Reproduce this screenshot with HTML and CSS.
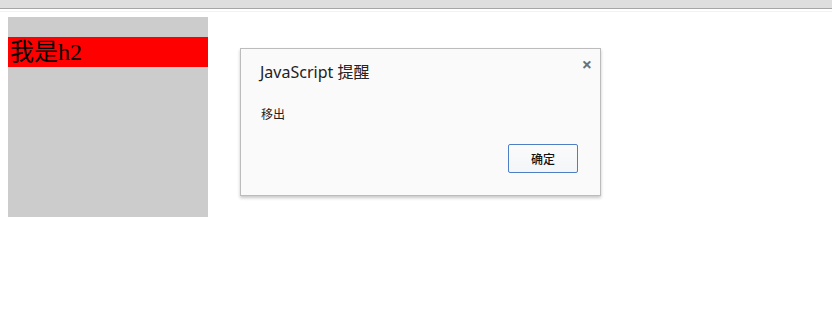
FILE: index.html
```html
<!DOCTYPE html>
<html lang="zh">
<head>
<meta charset="utf-8">
<title>JavaScript 提醒</title>
<link rel="stylesheet" href="styles.css">
</head>
<body>
<div class="topbar"></div>
<main class="page">
  <div class="box">
    <h2 class="heading">我是h2</h2>
  </div>
</main>
<div class="dialog" role="alertdialog">
  <div class="dialog-head">
    <span class="dialog-title">JavaScript 提醒</span>
    <span class="dialog-close">×</span>
  </div>
  <div class="dialog-msg">移出</div>
  <div class="dialog-foot">
    <button class="dialog-btn">确定</button>
  </div>
</div>
</body>
</html>
```
FILE: styles.css
```css
html, body {
  margin: 0;
  padding: 0;
  background: #ffffff;
}
body {
  position: relative;
  width: 832px;
  height: 310px;
  overflow: hidden;
}
.topbar {
  height: 8px;
  background: #dedede;
  border-bottom: 1px solid #a6a6a6;
  box-shadow: 0 2px 0 #ffffff, 0 3px 0 #f2f2f2;
}
.page {
  padding: 8px;
}
.box {
  width: 200px;
  height: 200px;
  background: #cccccc;
  overflow: hidden;
}
.heading {
  margin: 20px 0 0;
  height: 30px;
  line-height: 30px;
  background: #ff0000;
  color: #000;
  font-family: "Liberation Serif", "Noto Sans CJK SC", serif;
  font-size: 24px;
  font-weight: normal;
  padding-left: 2px;
}
.dialog {
  position: absolute;
  left: 240px;
  top: 48px;
  width: 361px;
  height: 148px;
  box-sizing: border-box;
  background: #fafafa;
  border: 1px solid #bcbcbc;
  box-shadow: 0 2px 3px rgba(0,0,0,0.22);
  padding: 0 22px 0 19px;
  display: flex;
  flex-direction: column;
  font-family: "Noto Sans", "Noto Sans CJK SC", sans-serif;
  color: #222;
}
.dialog-head {
  display: flex;
  justify-content: space-between;
  align-items: flex-start;
  padding-top: 11px;
}
.dialog-title {
  font-size: 16px;
  line-height: 24px;
  color: #222;
}
.dialog-close {
  margin-right: -14px;
  margin-top: -5px;
  font-size: 18px;
  font-weight: bold;
  line-height: 18px;
  color: #707070;
}
.dialog-msg {
  margin-top: 22px;
  font-size: 12px;
  line-height: 18px;
  padding-left: 1px;
}
.dialog-foot {
  display: flex;
  justify-content: flex-end;
  margin-top: 20px;
}
.dialog-btn {
  width: 70px;
  height: 29px;
  box-sizing: border-box;
  background: linear-gradient(#fbfbfb, #f3f5f8);
  border: 1px solid #4d7fc4;
  border-radius: 2px;
  font-family: "Noto Sans CJK SC", sans-serif;
  font-size: 12px;
  font-weight: 500;
  color: #111;
  padding: 0;
}
```
